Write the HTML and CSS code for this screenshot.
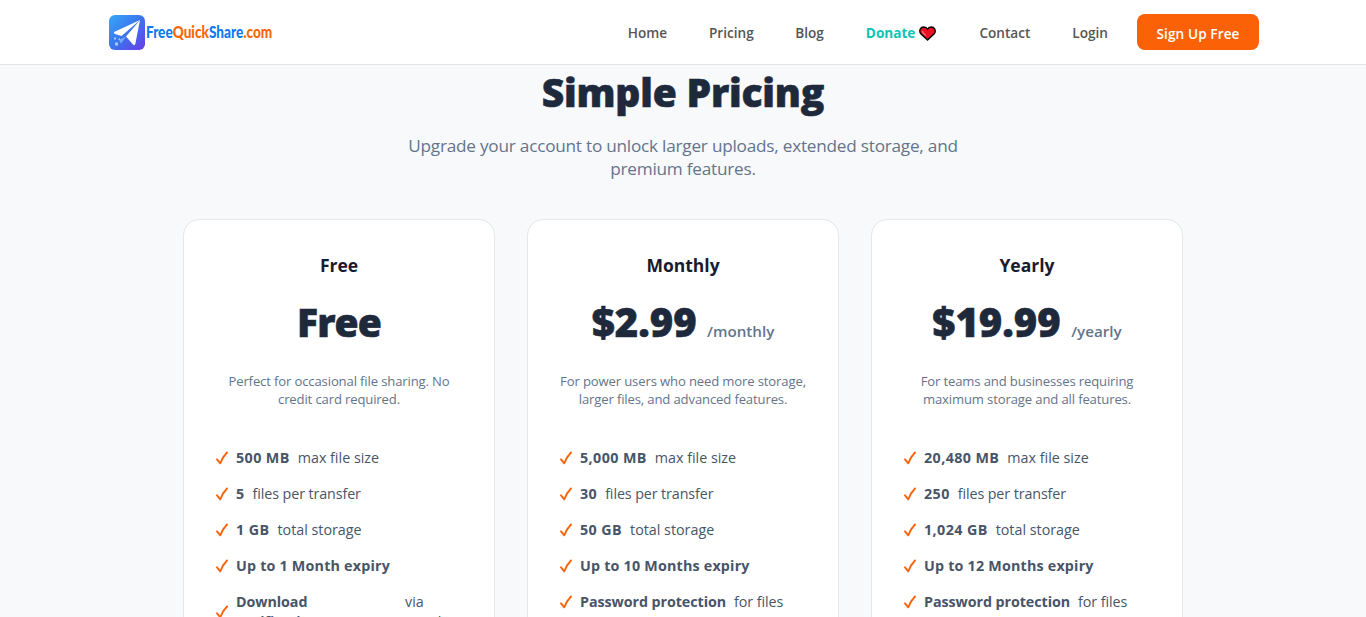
FILE: index.html
```
<!DOCTYPE html>
<html lang="en">
<head>
  <meta charset="UTF-8">
  <meta name="viewport" content="width=device-width, initial-scale=1.0">
  <title>Pricing - FreeQuickShare.com</title>
  <link rel="stylesheet" href="styles.css">
</head>
<body>
  <svg width="0" height="0" class="sprite">
    <symbol id="check" viewBox="0 0 12 14">
      <path d="M1 8.300 L4.300 12.300 Q6.500 6 11 1.500" fill="none" stroke="#f9640d" stroke-width="1.900" stroke-linecap="round" stroke-linejoin="round"/>
    </symbol>
  </svg>

  <header class="header">
    <div class="header-inner">
      <a href="#" class="logo">
        <svg class="logo-icon" viewBox="0 0 36 35">
          <defs>
            <linearGradient id="logoBg" x1="0" y1="0" x2="1" y2="1">
              <stop offset="0" stop-color="#36a9f8"/>
              <stop offset="0.5" stop-color="#3c74ee"/>
              <stop offset="1" stop-color="#6a3be8"/>
            </linearGradient>
          </defs>
          <rect width="36" height="35" rx="6" fill="url(#logoBg)"/>
          <path d="M31 5 L5 17 Q4.500 18.500 6 19 L12.500 21 Z" fill="#fff"/>
          <path d="M31 5 L17 21.500 L24 29.500 Q25.500 31 26.300 29 Z" fill="#fff"/>
          <path d="M17 21.500 L10 25 L12 28.500 Z" fill="#79aaf8"/>
          <path d="M5 22.500h2v2h-2zM9.500 23.500h1.500v1.500h-1.500zM6 27.500h3v3h-3z" fill="#9fd0fd"/>
        </svg>
        <span class="logo-text">Free<b>Quick</b>Share<b>.com</b></span>
      </a>
      <nav class="nav">
        <a href="#">Home</a>
        <a href="#">Pricing</a>
        <a href="#">Blog</a>
        <a href="#" class="donate">Donate
          <svg class="heart" viewBox="0 0 17 15"><path d="M8.500 14 L1.500 7.500 C-.5 4 2 1 4.700 1 C6.500 1 8 2 8.500 3.200 C9 2 10.500 1 12.300 1 C15 1 17.500 4 15.500 7.500 Z" fill="#e81224" stroke="#000" stroke-width="1.300"/><path d="M3.300 5 Q4 8 7 9.500" fill="none" stroke="#f4707a" stroke-width="1.200"/></svg>
        </a>
        <a href="#">Contact</a>
        <a href="#">Login</a>
        <a href="#" class="btn-signup">Sign Up Free</a>
      </nav>
    </div>
  </header>

  <main class="pricing">
    <h1>Simple Pricing</h1>
    <p class="subtitle">Upgrade your account to unlock larger uploads, extended storage, and premium features.</p>

    <div class="plans">
      <div class="plan">
        <h2>Free</h2>
        <div class="price price-free">Free</div>
        <p class="desc">Perfect for occasional file sharing. No credit card required.</p>
        <ul class="features">
          <li><svg class="check"><use href="#check"/></svg><strong>500 MB</strong> max file size</li>
          <li><svg class="check"><use href="#check"/></svg><strong>5</strong> files per transfer</li>
          <li><svg class="check"><use href="#check"/></svg><strong>1 GB</strong> total storage</li>
          <li><svg class="check"><use href="#check"/></svg><strong>Up to 1 Month expiry</strong></li>
          <li><svg class="check"><use href="#check"/></svg><strong>Download notifications</strong> via email</li>
        </ul>
      </div>

      <div class="plan">
        <h2>Monthly</h2>
        <div class="price">$2.99 <span>/monthly</span></div>
        <p class="desc">For power users who need more storage, larger files, and advanced features.</p>
        <ul class="features">
          <li><svg class="check"><use href="#check"/></svg><strong>5,000 MB</strong> max file size</li>
          <li><svg class="check"><use href="#check"/></svg><strong>30</strong> files per transfer</li>
          <li><svg class="check"><use href="#check"/></svg><strong>50 GB</strong> total storage</li>
          <li><svg class="check"><use href="#check"/></svg><strong>Up to 10 Months expiry</strong></li>
          <li><svg class="check"><use href="#check"/></svg><strong>Password protection</strong> for files</li>
        </ul>
      </div>

      <div class="plan">
        <h2>Yearly</h2>
        <div class="price">$19.99 <span>/yearly</span></div>
        <p class="desc">For teams and businesses requiring maximum storage and all features.</p>
        <ul class="features">
          <li><svg class="check"><use href="#check"/></svg><strong>20,480 MB</strong> max file size</li>
          <li><svg class="check"><use href="#check"/></svg><strong>250</strong> files per transfer</li>
          <li><svg class="check"><use href="#check"/></svg><strong>1,024 GB</strong> total storage</li>
          <li><svg class="check"><use href="#check"/></svg><strong>Up to 12 Months expiry</strong></li>
          <li><svg class="check"><use href="#check"/></svg><strong>Password protection</strong> for files</li>
        </ul>
      </div>
    </div>
  </main>
</body>
</html>
```
FILE: styles.css
```
* { box-sizing: border-box; margin: 0; padding: 0; }
body {
  background: #f7f9fb;
  color: #1e293b;
  font-family: "Open Sans", "Noto Sans", sans-serif;
  height: 617px;
  overflow: hidden;
}
a { color: inherit; text-decoration: none; }
.sprite { display: none; }

.header {
  background: #fff;
  border-bottom: 1px solid #e2e5ea;
  height: 65px;
}
.header-inner {
  width: 1150px;
  height: 64px;
  margin-left: 109px;
  display: flex;
  justify-content: space-between;
  align-items: center;
}

.logo { display: flex; align-items: center; gap: 1px; }
.logo-icon { width: 36px; height: 35px; }
.logo-text {
  font-family: Lato, sans-serif;
  font-weight: 900;
  font-size: 17px;
  line-height: 20px;
  color: #1078f0;
  transform: scaleX(0.8);
  transform-origin: left;
}
.logo-text b { color: #fb6509; font-weight: 900; }

.nav {
  display: flex;
  align-items: center;
  font-size: 13.6px;
  font-weight: 600;
  line-height: 20px;
  color: #555;
}
.nav a { margin-right: 42px; padding-top: 2px; }
.nav .donate {
  display: flex;
  align-items: center;
  gap: 4px;
  margin-right: 43px;
  color: #0bc4b4;
  font-weight: 700;
}
.heart { width: 17px; height: 15px; }
.nav a:nth-child(2) { margin-right: 41.5px; }
.nav a:nth-child(6) { margin-right: 29px; }
.nav .btn-signup {
  width: 122px;
  height: 36px;
  line-height: 35px;
  margin: 0;
  border-radius: 8px;
  background: #fb6107;
  color: #fff;
  text-align: center;
  letter-spacing: 0.1px;
}

.pricing { text-align: center; }
h1 {
  font-size: 39px;
  font-weight: 800;
  line-height: 54px;
  letter-spacing: -0.2px;
  -webkit-text-stroke: 0.6px #1e293b;
}
.subtitle {
  width: 600px;
  margin: 15px auto 0;
  font-size: 17.2px;
  line-height: 23px;
  letter-spacing: -0.23px;
  color: #64748b;
}

.plans {
  width: 1000px;
  margin: 39px auto 0;
  display: grid;
  grid-template-columns: repeat(3, 1fr);
  gap: 32px;
}
.plan {
  background: #fff;
  border: 1px solid #e5e7eb;
  border-radius: 16px;
  padding: 32px;
  height: 500px;
}
.plan h2 {
  font-size: 17.5px;
  line-height: 26px;
  font-weight: 700;
  color: #1a1a2e;
}
.price {
  height: 54px;
  margin-top: 17px;
  font-size: 40px;
  font-weight: 800;
  line-height: 54px;
  -webkit-text-stroke: 0.6px #1e293b;
}
.price-free { font-size: 39px; letter-spacing: -0.9px; }
.price span {
  font-size: 15.2px;
  font-weight: 600;
  line-height: 1;
  color: #64748b;
  -webkit-text-stroke: 0;
}
.desc {
  margin: 23px -6px 0;
  font-size: 13.1px;
  line-height: 18px;
  letter-spacing: -0.14px;
  color: #64748b;
}

.features { list-style: none; margin-top: 32px; }
.features li {
  display: flex;
  align-items: center;
  gap: 8px;
  padding: 8px 0;
  font-size: 14.3px;
  line-height: 20px;
  color: #475569;
  text-align: left;
}
.features li:nth-child(2) { letter-spacing: -0.1px; }
.features li:nth-child(-n+3) strong { letter-spacing: 0.4px; }
.features li:nth-child(4) strong { letter-spacing: 0.2px; }
.features li:nth-child(5) { letter-spacing: -0.07px; }
.check { width: 12px; height: 14px; flex-shrink: 0; }
```
